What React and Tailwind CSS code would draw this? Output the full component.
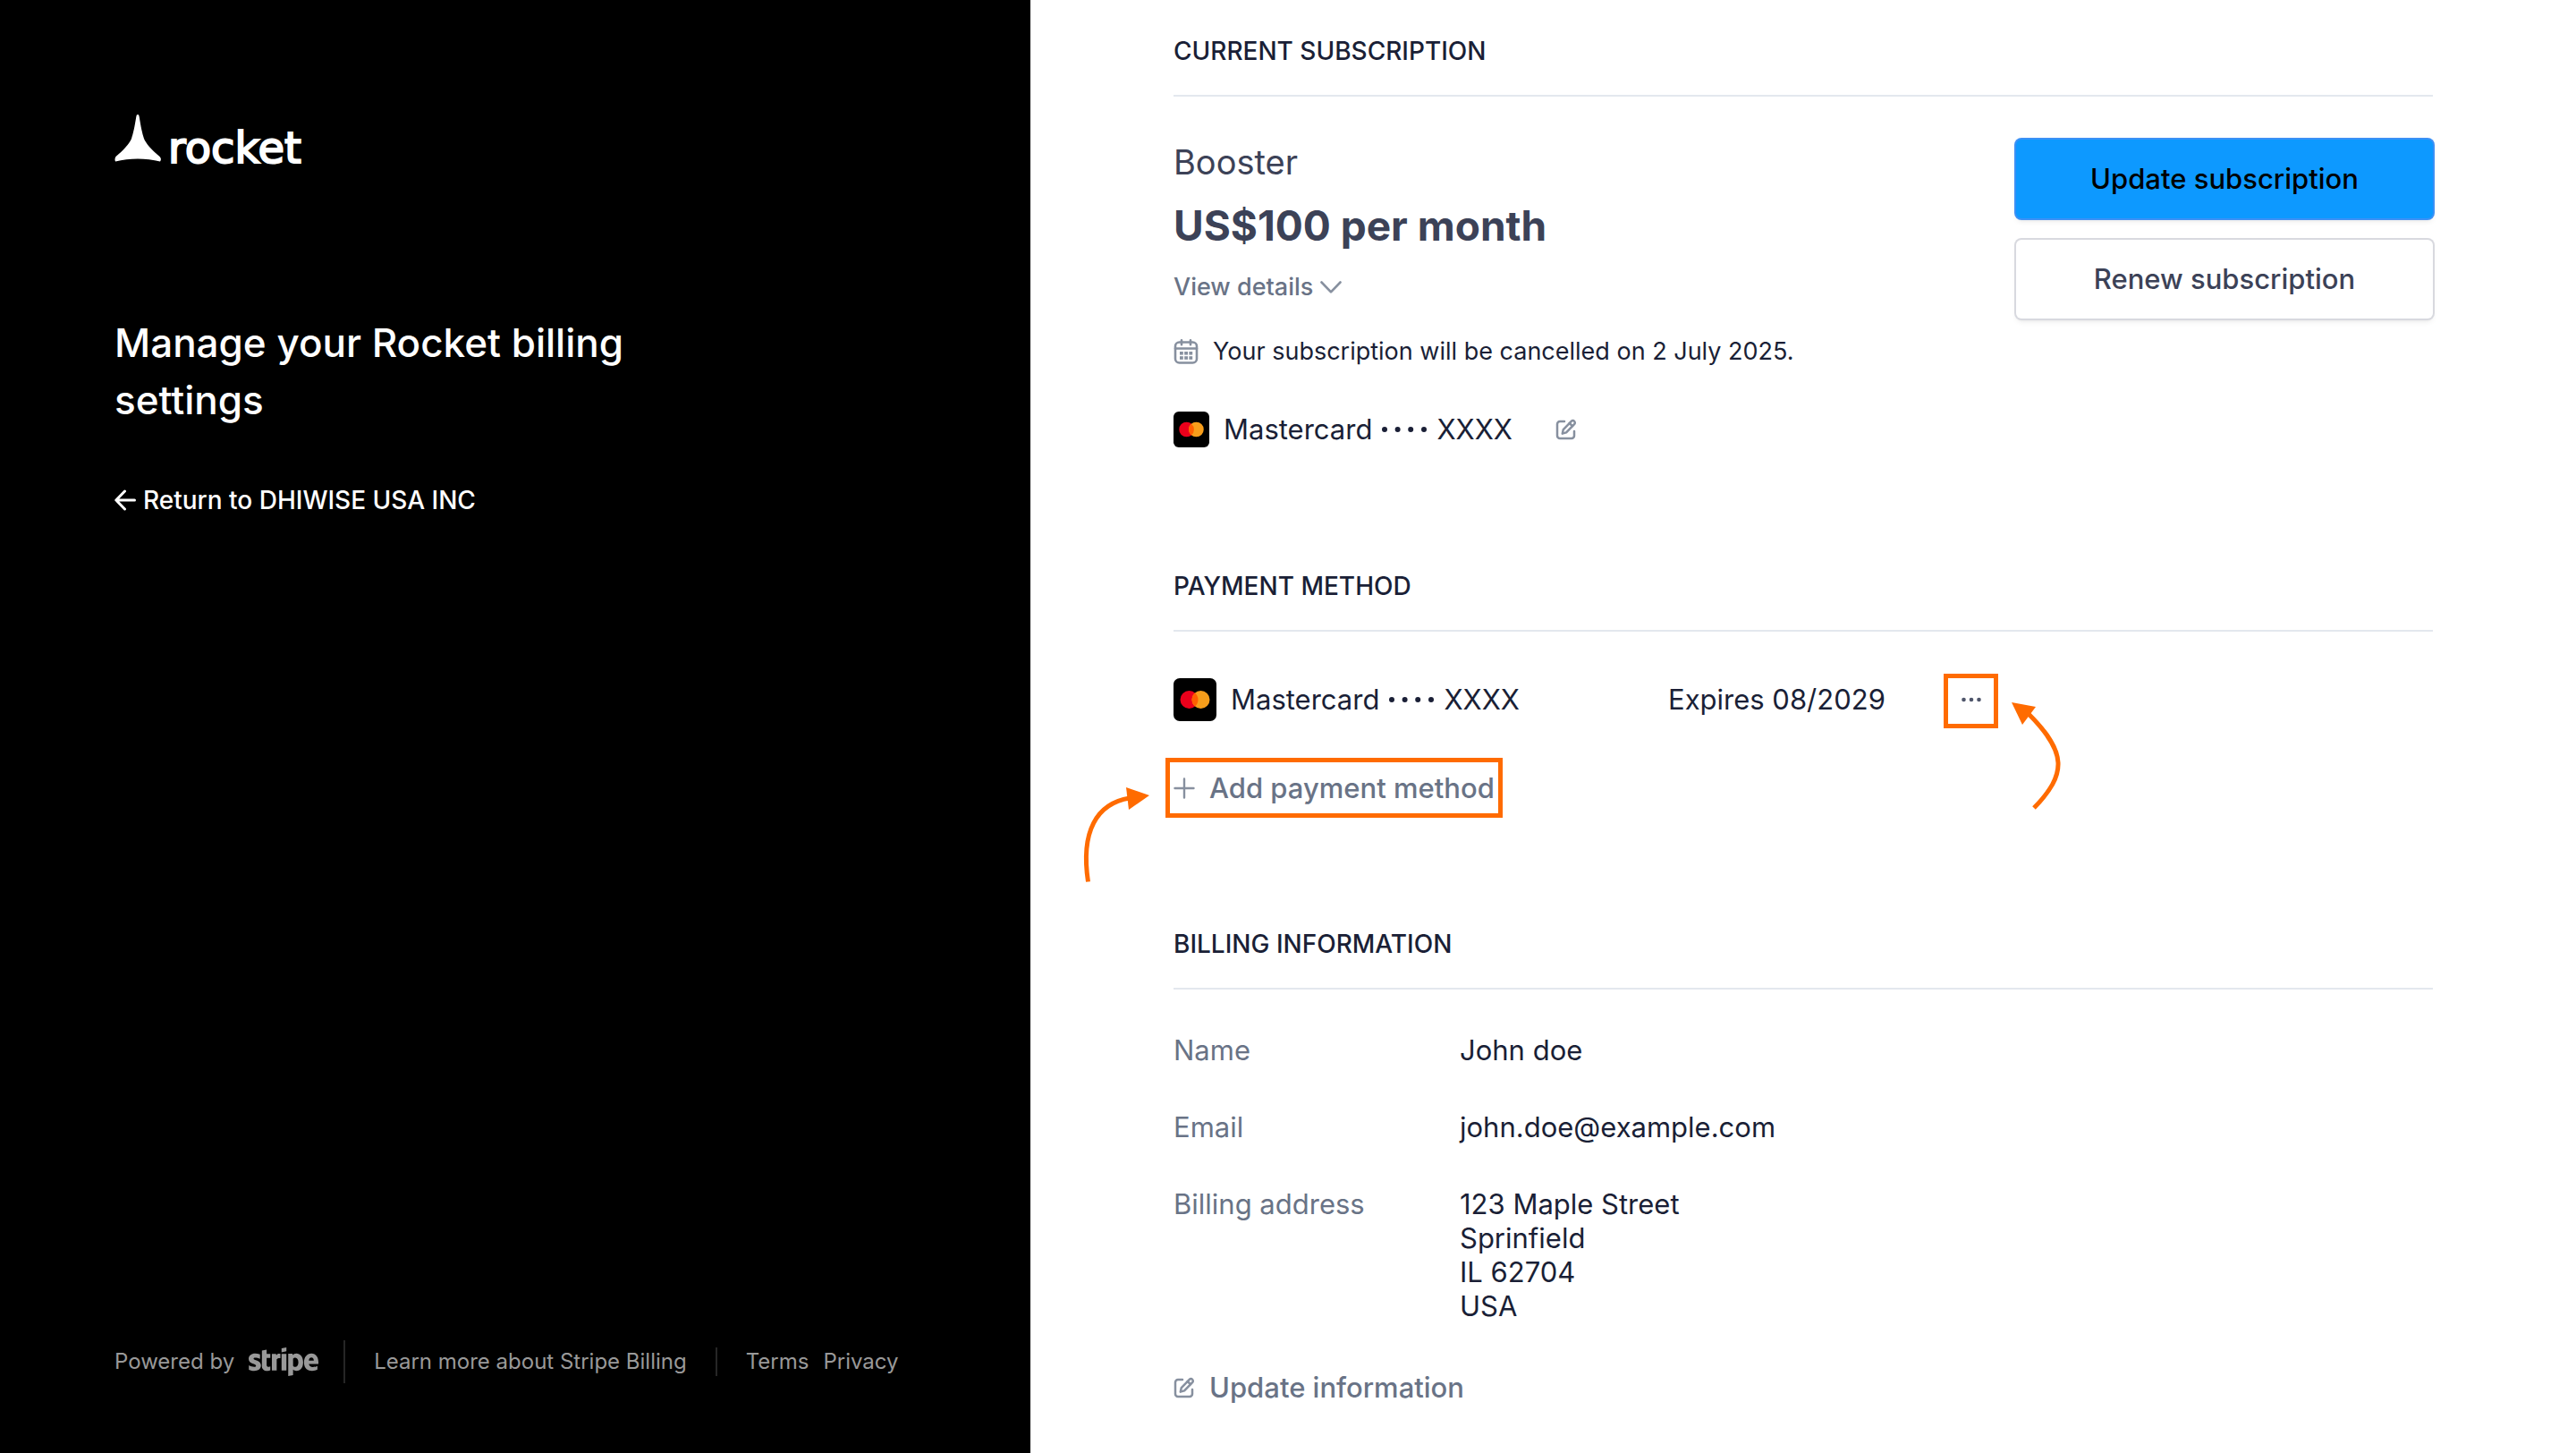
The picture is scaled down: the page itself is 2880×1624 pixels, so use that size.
import React from "react";
import { FaStripe } from "react-icons/fa";

function RocketMark() {
  return (
    <svg viewBox="0 0 52 54" className="h-[54px] w-[52px]" fill="white" aria-hidden="true">
      <path d="M26 0c1 0 1.400 .8 1.700 2.600C29.500 14 31 21 33 27c2 5 8 12 17.500 20 1.500 1.500 2 3.500 .5 5.500-16-4-34-4-50 0-1-2-.5-4 .5-5.500C10 40 17 32 19 27c2-6 3.500-13 5.300-24.400C24.600.8 25 0 26 0z" />
    </svg>
  );
}

function ArrowLeft() {
  return (
    <svg viewBox="0 0 24 24" className="h-6 w-6" fill="none" stroke="currentColor" strokeWidth="3" strokeLinecap="round" strokeLinejoin="round" aria-hidden="true">
      <path d="M22.500 12H2M11.500 2 1.800 12l9.700 10" />
    </svg>
  );
}

function ChevronDown() {
  return (
    <svg viewBox="0 0 24 14" className="h-3.5 w-6" fill="none" stroke="#87909f" strokeWidth="2.6" strokeLinecap="round" strokeLinejoin="round" aria-hidden="true">
      <path d="M1.500 1.500 12 12.300 22.500 1.500" />
    </svg>
  );
}

function Calendar() {
  return (
    <svg viewBox="0 0 28 28" className="h-7 w-7" fill="none" stroke="#87909f" strokeWidth="2.6" strokeLinecap="round" aria-hidden="true">
      <rect x="2" y="3.500" width="24" height="23" rx="4.500" />
      <path d="M2 10.500h24M9 1.300v5M19 1.300v5" />
      <g fill="#87909f" stroke="none">
        <rect x="7" y="14" width="3.800" height="3.600" />
        <rect x="12.200" y="14" width="3.800" height="3.600" />
        <rect x="17.400" y="14" width="3.800" height="3.600" />
        <rect x="7" y="19.200" width="3.800" height="3.600" />
        <rect x="12.200" y="19.200" width="3.800" height="3.600" />
        <rect x="17.400" y="19.200" width="3.800" height="3.600" />
      </g>
    </svg>
  );
}

function EditIcon() {
  return (
    <svg viewBox="0 0 24 24" className="h-6 w-6" fill="none" stroke="#87909f" strokeWidth="2.5" strokeLinecap="round" strokeLinejoin="round" aria-hidden="true">
      <path d="M10 3H5A3 3 0 0 0 2 6v13a3 3 0 0 0 3 3h13a3 3 0 0 0 3-3v-5" />
      <path d="M17.800 2.800a2.300 2.300 0 0 1 3.300 3.300l-9 9.300-4.300 1.200 1-4.500z" />
      <path d="m15.700 5 3.200 3.200" />
    </svg>
  );
}

function Plus() {
  return (
    <svg viewBox="0 0 24 24" className="h-6 w-6" fill="none" stroke="#87909f" strokeWidth="2.4" strokeLinecap="round" aria-hidden="true">
      <path d="M12 1.500v21M1.500 12h21" />
    </svg>
  );
}

function MastercardIcon({ className }) {
  return (
    <svg viewBox="0 0 48 48" className={className} aria-hidden="true">
      <rect width="48" height="48" rx="7" />
      <circle cx="17.500" cy="24" r="10" fill="#eb001b" />
      <circle cx="30.500" cy="24" r="10" fill="#f79e1b" />
      <path d="M24 16.400a10 10 0 0 1 0 15.200 10 10 0 0 1 0-15.200z" fill="#ff5f00" />
    </svg>
  );
}

function CardNumber() {
  return (
    <span className="flex items-center gap-[11px]">
      Mastercard
      <svg viewBox="0 0 50 6" className="h-1.5 w-[50px]" fill="currentColor" role="img" aria-label="ending in">
        <circle cx="3" cy="3" r="3" />
        <circle cx="17.600" cy="3" r="3" />
        <circle cx="32.200" cy="3" r="3" />
        <circle cx="47" cy="3" r="3" />
      </svg>
      XXXX
    </span>
  );
}

function SectionTitle({ children }) {
  return (
    <h2 className="border-b-2 border-[#e3e8ee] pb-[31px] text-[28px] leading-9 font-medium text-[#1a1f36]">
      {children}
    </h2>
  );
}

function DetailRow({ label, children }) {
  return (
    <div className="flex">
      <dt className="w-80 shrink-0 text-[#697386]">{label}</dt>
      <dd>{children}</dd>
    </div>
  );
}

export default function App() {
  return (
    <div className="flex min-h-screen bg-white font-['Inter',sans-serif] text-[31px] leading-[38px] text-[#1a1f36]">
      <aside className="flex w-2/5 flex-col bg-black px-32 pt-32 pb-[78px] text-white">
        <div className="flex items-end gap-2">
          <RocketMark />
          <span className="font-['DejaVu_Sans',sans-serif] text-[48px] leading-[34px] [-webkit-text-stroke:2px_white]">rocket</span>
        </div>
        <h1 className="mt-[169px] max-w-[640px] text-[44px] leading-[64px] font-medium">
          Manage your Rocket billing settings
        </h1>
        <a href="#return" className="mt-[62px] flex items-center gap-2 text-[28px] leading-9 font-medium">
          <ArrowLeft />
          Return to DHIWISE USA INC
        </a>
        <footer className="mt-auto flex items-center text-[24px] leading-8 text-[#999999]">
          <a href="#stripe" className="flex h-12 items-center gap-4 border-r-2 border-[#262626] pr-7">
            Powered by
            <FaStripe className="h-20 w-[78px]" aria-label="Stripe" />
          </a>
          <a href="#learn" className="border-r-2 border-[#262626] px-8">
            Learn more about Stripe Billing
          </a>
          <a href="#terms" className="pl-8">Terms</a>
          <a href="#privacy" className="pl-4">Privacy</a>
        </footer>
      </aside>

      <main className="flex-1 px-40 pt-[39px]">
        <section>
          <SectionTitle>CURRENT SUBSCRIPTION</SectionTitle>
          <div className="mt-12 flex items-start justify-between">
            <div>
              <p className="text-[38px] leading-[50px] text-[#3c4257]">Booster</p>
              <p className="mt-3 text-[46px] leading-[68px] font-bold text-[#3c4257]">US$100 per month</p>
              <button type="button" className="mt-[17px] flex items-center gap-2 text-[27px] leading-9 font-medium text-[#697386]">
                View details
                <ChevronDown />
              </button>
              <p className="mt-9 flex items-center gap-4 text-[27px] leading-9">
                <Calendar />
                Your subscription will be cancelled on 2 July 2025.
              </p>
              <div className="mt-[49px] flex items-center gap-4">
                <MastercardIcon className="h-10 w-10" />
                <CardNumber />
                <button type="button" aria-label="Edit payment method" className="ml-8">
                  <EditIcon />
                </button>
              </div>
            </div>
            <div className="flex w-[466px] flex-col gap-6 font-medium">
              <button type="button" className="h-[88px] rounded-md bg-[#0d99ff] text-black shadow-md ring-2 ring-[#3c90f5]">
                Update subscription
              </button>
              <button type="button" className="h-[88px] rounded-md bg-white text-[#3c4257] shadow-md ring-2 ring-[#d8d9df]">
                Renew subscription
              </button>
            </div>
          </div>
        </section>

        <section className="mt-[137px]">
          <SectionTitle>PAYMENT METHOD</SectionTitle>
          <div className="mt-[47px] flex h-[61px] items-center">
            <div className="flex w-[553px] items-center gap-4 pb-1">
              <MastercardIcon className="h-12 w-12" />
              <CardNumber />
            </div>
            <span className="w-[308px] pb-1">Expires 08/2029</span>
            <div className="relative">
              <button type="button" aria-label="More options" className="flex h-[61px] w-[61px] items-center justify-center border-[5px] border-[#ff6b00] pb-1">
                <svg viewBox="0 0 22 6" className="h-1.5 w-[22px]" fill="#4f566b" aria-hidden="true">
                  <circle cx="2.500" cy="3" r="2.300" />
                  <circle cx="11" cy="3" r="2.300" />
                  <circle cx="19.500" cy="3" r="2.300" />
                </svg>
              </button>
              <svg viewBox="0 0 60 124" className="absolute top-7 left-[74px] h-[124px] w-[60px]" aria-hidden="true">
                <path d="M27 122C64 84 64 60 21 17" fill="none" stroke="#ff6b00" strokeWidth="5" />
                <path d="M2 4 29 9 14 29z" fill="#ff6b00" />
              </svg>
            </div>
          </div>
          <div className="relative mt-[33px] -ml-[9px] w-fit">
            <button type="button" className="flex h-[67px] items-center gap-4 border-[5px] border-[#ff6b00] px-1 font-medium text-[#697386]">
              <Plus />
              Add payment method
            </button>
            <svg viewBox="0 0 80 112" className="absolute top-7 right-full mr-4 h-[112px] w-[80px]" aria-hidden="true">
              <path d="M9.500 110.500C1 54 19 23 56 17" fill="none" stroke="#ff6b00" strokeWidth="5" />
              <path d="M78 14 52 5 55 30z" fill="#ff6b00" />
            </svg>
          </div>
        </section>

        <section className="mt-[123px]">
          <SectionTitle>BILLING INFORMATION</SectionTitle>
          <dl className="mt-[49px] flex flex-col gap-12">
            <DetailRow label="Name">John doe</DetailRow>
            <DetailRow label="Email">john.doe@example.com</DetailRow>
            <DetailRow label="Billing address">
              123 Maple Street
              <br />
              Sprinfield
              <br />
              IL 62704
              <br />
              USA
            </DetailRow>
          </dl>
          <button type="button" className="mt-[53px] flex items-center gap-4 font-medium text-[#697386]">
            <EditIcon />
            Update information
          </button>
        </section>
      </main>
    </div>
  );
}
